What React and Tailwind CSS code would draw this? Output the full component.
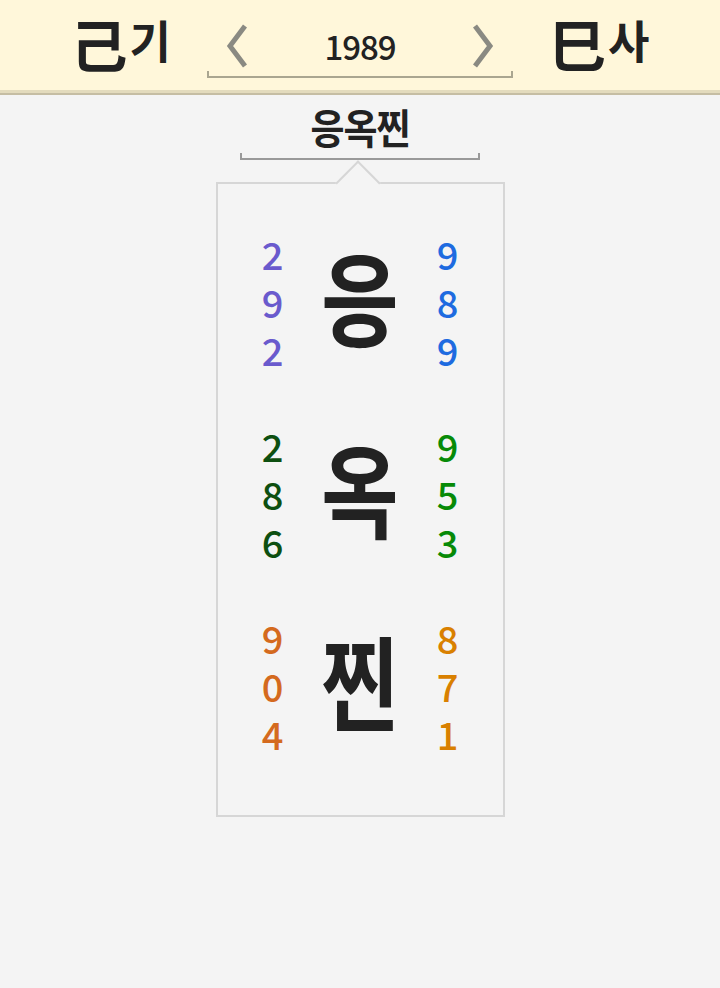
import React from 'react';

const KR = { fontFamily: '"Noto Sans CJK KR", "Noto Sans", sans-serif' };

const rows = [
  { ch: '응', left: ['2', '9', '2'], right: ['9', '8', '9'], lc: 'text-[#6a5acd]', rc: 'text-[#1e6be0]' },
  { ch: '옥', left: ['2', '8', '6'], right: ['9', '5', '3'], lc: 'text-[#0d4f10]', rc: 'text-[#078a07]' },
  { ch: '찐', left: ['9', '0', '4'], right: ['8', '7', '1'], lc: 'text-[#d46a1e]', rc: 'text-[#d98000]' },
];

const Chevron = ({ dir }) => (
  <svg width="28" height="46" viewBox="0 0 28 46" className="shrink-0">
    <path
      d={dir === 'left' ? 'M22 3 L7 23 L22 43' : 'M6 3 L21 23 L6 43'}
      fill="none"
      stroke="#8a8a82"
      strokeWidth="5"
    />
  </svg>
);

const Digits = ({ list, color }) => (
  <p className={`w-[40px] text-center text-[38px] leading-[48px] font-medium ${color}`}>
    {list[0]}<br />{list[1]}<br />{list[2]}
  </p>
);

const Ganji = ({ han, kor }) => (
  <div className="flex items-start text-[#222] font-bold">
    <span className="text-[57px] leading-[60px]">{han}</span>
    <span className="text-[45px] leading-[50px] mt-[3px] ml-[2px]">{kor}</span>
  </div>
);

export default function App() {
  return (
    <div className="w-[720px] h-[988px] bg-[#f4f4f4] overflow-hidden" style={KR}>
      {/* header */}
      <div className="h-[90px] bg-[#fff7da] flex items-center justify-center gap-[36px]">
        <div className="pb-[6px]"><Ganji han="己" kor="기" /></div>
        <div className="self-start mt-[8px] w-[306px] h-[70px] relative flex items-center justify-between px-[16px] pt-[6px]">
          <div className="absolute left-0 right-0 bottom-0 h-[7px] border-b-2 border-l-2 border-r-2 border-[#aaa690]" />
          <Chevron dir="left" />
          <span className="text-[33px] font-medium text-[#222] leading-none tracking-[-1px]">1989</span>
          <Chevron dir="right" />
        </div>
        <div className="pb-[6px]"><Ganji han="巳" kor="사" /></div>
      </div>
      <div className="h-[3px] bg-[#e3dbbd]" />
      <div className="h-[2px] bg-[#c5bda3]" />

      {/* title */}
      <div className="flex flex-col items-center pt-[7px]">
        <span className="text-[37px] font-bold text-[#222] leading-[48px] tracking-[-1px] scale-y-[1.1]">응옥찐</span>
        <div className="w-[240px] h-[7px] mt-[3px] border-b-2 border-l-2 border-r-2 border-[#999]" />

        {/* card */}
        <div className="relative mt-[22px] w-[289px] h-[635px] border-2 border-[#d6d6d6] pt-[46px] flex flex-col gap-[48px]">
          <div className="absolute left-[124px] top-[-17px] w-[32px] h-[32px] rotate-45 border-t-2 border-l-2 border-[#d6d6d6] bg-[#f4f4f4]" />
          {rows.map((r, i) => (
            <div key={i} className="flex items-center justify-between px-[35px]">
              <Digits list={r.left} color={r.lc} />
              <span className="text-[84px] font-bold text-[#222] leading-none scale-y-[1.22] pb-[12px]">{r.ch}</span>
              <Digits list={r.right} color={r.rc} />
            </div>
          ))}
        </div>
      </div>
    </div>
  );
}
